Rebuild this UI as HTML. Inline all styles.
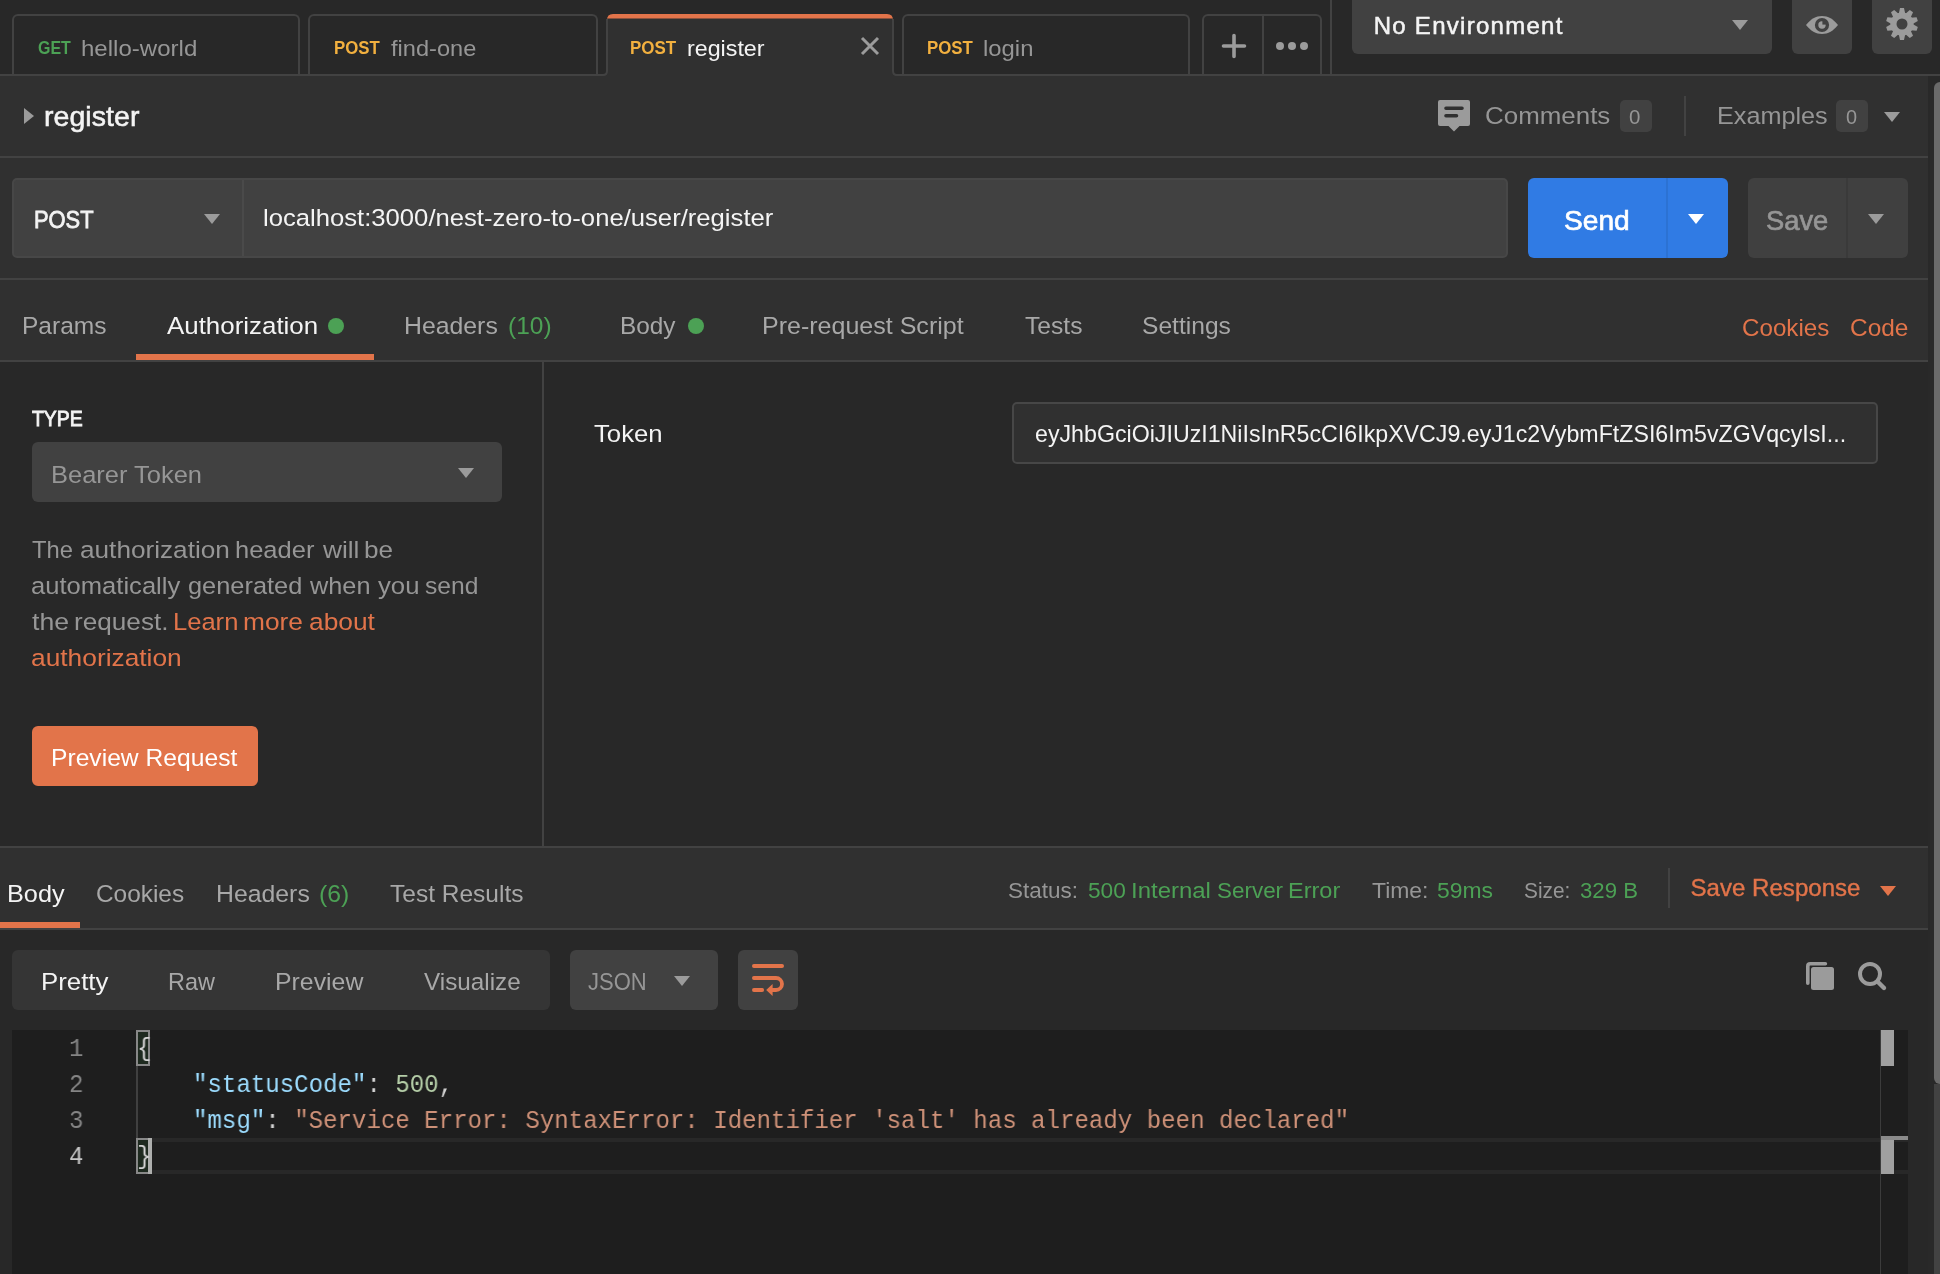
<!DOCTYPE html>
<html lang="en"><head><meta charset="utf-8"><title>Postman</title>
<style>
*{margin:0;padding:0;box-sizing:border-box}
html,body{width:1940px;height:1274px;overflow:hidden;background:#303030;font-family:"Liberation Sans",sans-serif}
body{position:relative}
.b{position:absolute}
.t{position:absolute;transform-origin:0 0;white-space:nowrap;line-height:1em;font-family:"Liberation Sans",sans-serif}
.m{position:absolute;will-change:transform;transform-origin:0 50%;white-space:pre;line-height:36px;font-size:25.5px;font-family:"Liberation Mono",monospace}
.tab{position:absolute;top:14px;height:60px;width:288px;border:2px solid #424242;border-bottom:none;border-radius:6px 6px 0 0;background:#282828}
svg{position:absolute;overflow:visible}
#tx{position:absolute;left:0;top:0;width:1940px;height:1274px;will-change:transform}

</style></head>
<body>
<!-- top bar -->
<div class="b" style="left:0;top:0;width:1940px;height:74px;background:#282828"></div>
<div class="tab" style="left:12px"></div>
<div class="tab" style="left:308px;width:290px"></div>
<div class="tab" style="left:902px"></div>
<!-- plus / dots box -->
<div class="tab" style="left:1202px;width:120px"></div>
<div class="b" style="left:1262px;top:16px;width:2px;height:58px;background:#424242"></div>
<div class="b" style="left:1330px;top:0;width:2px;height:74px;background:#424242"></div>
<div class="b" style="left:0;top:74px;width:1940px;height:2px;background:#424242"></div>
<!-- active tab -->
<svg style="left:596px;top:14px" width="308" height="62" viewBox="0 0 308 62">
<path d="M2 62H6Q11 62 11 57V6Q11 0 17 0H291Q297 0 297 6V57Q297 62 302 62H306Z" fill="#303030"/>
<path d="M0 61H7Q11 61 11 57V5M308 61H301Q297 61 297 57V5" stroke="#424242" stroke-width="2" fill="none"/>
<path d="M11 4.500V6Q11 0 17 0H291Q297 0 297 6V4.500Z" fill="#e2744a"/>
</svg>
<!-- close x -->
<svg style="left:861px;top:37px" width="18" height="18" viewBox="0 0 18 18"><path d="M1 1L17 17M17 1L1 17" stroke="#9b9b9b" stroke-width="3" fill="none"/></svg>
<svg style="left:1222px;top:34px" width="24" height="24" viewBox="0 0 24 24"><path d="M12 1.5V22.5M1.5 12H22.5" stroke="#9b9b9b" stroke-width="3.6" stroke-linecap="round" fill="none"/></svg>
<svg style="left:1276px;top:42px" width="32" height="8" viewBox="0 0 32 8"><circle cx="4" cy="4" r="4" fill="#9b9b9b"/><circle cx="16" cy="4" r="4" fill="#9b9b9b"/><circle cx="28" cy="4" r="4" fill="#9b9b9b"/></svg>
<!-- env selector -->
<div class="b" style="left:1352px;top:-6px;width:420px;height:60px;background:#414141;border-radius:6px"></div>
<svg style="left:1732px;top:20px" width="16" height="10" viewBox="0 0 16 10"><path d="M0 0H16L8 10Z" fill="#9b9b9b"/></svg>
<div class="b" style="left:1792px;top:-6px;width:60px;height:60px;background:#414141;border-radius:6px"></div>
<div class="b" style="left:1872px;top:-6px;width:60px;height:60px;background:#414141;border-radius:6px"></div>
<!-- eye -->
<svg style="left:1806px;top:16px" width="32" height="18" viewBox="0 0 32 18"><path d="M0 9C4.500 3.200 10 0 16 0S27.500 3.200 32 9C27.500 14.800 22 18 16 18S4.500 14.800 0 9Z" fill="#9b9b9b"/><circle cx="16" cy="9" r="7.100" fill="#414141"/><circle cx="16" cy="9" r="3.700" fill="#9b9b9b"/><path d="M16.400 8.600V4.800H20.200V8.600Z" fill="#414141"/></svg>
<!-- gear -->
<svg style="left:1886px;top:8px" width="32" height="32" viewBox="-16 -16 32 32"><g fill="#9b9b9b"><circle r="11.600"/><path id="gt" d="M-3.300 -10L-2 -16H2L3.300 -10Z"/><use href="#gt" transform="rotate(36)"/><use href="#gt" transform="rotate(72)"/><use href="#gt" transform="rotate(108)"/><use href="#gt" transform="rotate(144)"/><use href="#gt" transform="rotate(180)"/><use href="#gt" transform="rotate(216)"/><use href="#gt" transform="rotate(252)"/><use href="#gt" transform="rotate(288)"/><use href="#gt" transform="rotate(324)"/></g><circle r="5.500" fill="#414141"/></svg>

<!-- title row -->
<svg style="left:24px;top:108px" width="10" height="16" viewBox="0 0 10 16"><path d="M0 0L10 8L0 16Z" fill="#9b9b9b"/></svg>
<!-- comments icon -->
<svg style="left:1438px;top:100px" width="32" height="32" viewBox="0 0 32 32"><path d="M2 0H30Q32 0 32 2V24Q32 26 30 26H21.500L16 31.500L10.500 26H2Q0 26 0 24V2Q0 0 2 0Z" fill="#9b9b9b"/><path d="M8 8.300H24M8 15.700H18.500" stroke="#303030" stroke-width="3.600" stroke-linecap="round"/></svg>
<div class="b" style="left:1620px;top:100px;width:32px;height:32px;background:#414141;border-radius:5px"></div>
<div class="b" style="left:1684px;top:96px;width:2px;height:40px;background:#424242"></div>
<div class="b" style="left:1836px;top:100px;width:32px;height:32px;background:#414141;border-radius:5px"></div>
<svg style="left:1884px;top:112px" width="16" height="10" viewBox="0 0 16 10"><path d="M0 0H16L8 10Z" fill="#9b9b9b"/></svg>
<div class="b" style="left:0;top:156px;width:1928px;height:2px;background:#424242"></div>

<!-- url row -->
<div class="b" style="left:12px;top:178px;width:1496px;height:80px;background:#414141;border:2px solid #474747;border-radius:5px"></div>
<div class="b" style="left:242px;top:180px;width:2px;height:76px;background:#4a4a4a"></div>
<svg style="left:204px;top:214px" width="16" height="10" viewBox="0 0 16 10"><path d="M0 0H16L8 10Z" fill="#9b9b9b"/></svg>
<div class="b" style="left:1528px;top:178px;width:200px;height:80px;background:#307be4;border-radius:6px"></div>
<div class="b" style="left:1666px;top:178px;width:2px;height:80px;background:#2c72d3"></div>
<svg style="left:1688px;top:214px" width="16" height="10" viewBox="0 0 16 10"><path d="M0 0H16L8 10Z" fill="#ffffff"/></svg>
<div class="b" style="left:1748px;top:178px;width:160px;height:80px;background:#404040;border-radius:6px"></div>
<div class="b" style="left:1846px;top:178px;width:2px;height:80px;background:#3a3a3a"></div>
<svg style="left:1868px;top:214px" width="16" height="10" viewBox="0 0 16 10"><path d="M0 0H16L8 10Z" fill="#9b9b9b"/></svg>
<div class="b" style="left:0;top:278px;width:1928px;height:2px;background:#424242"></div>

<!-- request tabs -->
<div class="b" style="left:328px;top:318px;width:16px;height:16px;border-radius:50%;background:#4ca155"></div>
<div class="b" style="left:688px;top:318px;width:16px;height:16px;border-radius:50%;background:#4ca155"></div>
<div class="b" style="left:136px;top:354px;width:238px;height:6px;background:#e2744a"></div>
<div class="b" style="left:0;top:360px;width:1928px;height:2px;background:#424242"></div>

<!-- auth panel -->
<div class="b" style="left:0;top:362px;width:1928px;height:484px;background:#282828"></div>
<div class="b" style="left:542px;top:362px;width:2px;height:484px;background:#424242"></div>
<div class="b" style="left:32px;top:442px;width:470px;height:60px;background:#414141;border-radius:6px"></div>
<svg style="left:458px;top:468px" width="16" height="10" viewBox="0 0 16 10"><path d="M0 0H16L8 10Z" fill="#9b9b9b"/></svg>
<div class="b" style="left:32px;top:726px;width:226px;height:60px;background:#e2744a;border-radius:6px"></div>
<div class="b" style="left:1012px;top:402px;width:866px;height:62px;background:#303030;border:2px solid #474747;border-radius:5px"></div>
<div class="b" style="left:0;top:846px;width:1928px;height:2px;background:#424242"></div>

<!-- response tabs -->
<div class="b" style="left:0;top:922px;width:80px;height:6px;background:#e2744a"></div>
<div class="b" style="left:0;top:928px;width:1928px;height:2px;background:#424242"></div>
<div class="b" style="left:1668px;top:868px;width:2px;height:40px;background:#424242"></div>
<svg style="left:1880px;top:886px" width="16" height="10" viewBox="0 0 16 10"><path d="M0 0H16L8 10Z" fill="#e2744a"/></svg>

<!-- response body -->
<div class="b" style="left:0;top:930px;width:1928px;height:344px;background:#282828"></div>
<div class="b" style="left:12px;top:950px;width:538px;height:60px;background:#353535;border-radius:6px"></div>
<div class="b" style="left:570px;top:950px;width:148px;height:60px;background:#414141;border-radius:6px"></div>
<svg style="left:674px;top:976px" width="16" height="10" viewBox="0 0 16 10"><path d="M0 0H16L8 10Z" fill="#9b9b9b"/></svg>
<div class="b" style="left:738px;top:950px;width:60px;height:60px;background:#414141;border-radius:6px"></div>
<!-- wrap icon -->
<svg style="left:752px;top:962px" width="34" height="36" viewBox="0 0 34 36"><g stroke="#e2744a" stroke-width="3.800" stroke-linecap="round" fill="none"><path d="M1.900 4H30.100"/><path d="M1.900 16H24A6 6 0 0 1 24 28H19"/><path d="M1.900 28H10.200"/></g><path d="M14.200 28L20.600 22V34Z" fill="#e2744a"/></svg>
<!-- copy icon -->
<svg style="left:1806px;top:962px" width="28" height="28" viewBox="0 0 28 28"><rect x="5" y="5" width="23" height="23" rx="2.500" fill="#9b9b9b"/><path d="M1.800 21.200V4.200Q1.800 1.800 4.200 1.800H19.400" stroke="#9b9b9b" stroke-width="3.600" stroke-linecap="round" fill="none"/></svg>
<!-- search icon -->
<svg style="left:1858px;top:962px" width="28" height="28" viewBox="0 0 28 28"><circle cx="12" cy="12" r="10" stroke="#9b9b9b" stroke-width="4" fill="none"/><path d="M19.500 19.500L26 26" stroke="#9b9b9b" stroke-width="4.400" stroke-linecap="round"/></svg>

<!-- editor -->
<div class="b" style="left:12px;top:1030px;width:1896px;height:244px;background:#1e1e1e"></div>
<!-- current line -->
<div class="b" style="left:136px;top:1138px;width:1772px;height:36px;border-top:4px solid #282828;border-bottom:4px solid #282828"></div>
<!-- indent guide -->
<div class="b" style="left:136px;top:1066px;width:2px;height:72px;background:#404040"></div>
<!-- bracket boxes -->
<div class="b" style="left:136px;top:1030px;width:14px;height:36px;background:#1e2a1f;border:2px solid #888888"></div>
<div class="b" style="left:136px;top:1138px;width:14px;height:36px;background:#1e2a1f;border:2px solid #888888"></div>
<div class="b" style="left:148px;top:1138px;width:4px;height:36px;background:#aeafad"></div>
<!-- overview ruler -->
<div class="b" style="left:1880px;top:1030px;width:1px;height:244px;background:#3c3c3c"></div>
<div class="b" style="left:1881px;top:1030px;width:13px;height:36px;background:#a0a0a0"></div>
<div class="b" style="left:1881px;top:1138px;width:13px;height:36px;background:#a0a0a0"></div>
<div class="b" style="left:1881px;top:1136px;width:27px;height:4px;background:#8a8a8a"></div>
<div class="b" style="left:1894px;top:1142px;width:10px;height:28px;background:#1e1e1e"></div>
<!-- line numbers -->
<span class="m" style="left:69.15px;top:1032px;color:#858585;transform:scaleX(0.9443)">1</span>
<span class="m" style="left:69.15px;top:1068px;color:#858585;transform:scaleX(0.9443)">2</span>
<span class="m" style="left:69.15px;top:1104px;color:#858585;transform:scaleX(0.9443)">3</span>
<span class="m" style="left:69.15px;top:1140px;color:#c6c6c6;transform:scaleX(0.9443)">4</span>
<span class="m" style="left:136.80px;top:1032px;color:#d4d4d4;transform:scaleX(0.9443)">{</span>
<span class="m" style="left:193.10px;top:1068px;color:#d4d4d4;transform:scaleX(0.9443)"><span style="color:#9cdcfe">"statusCode"</span>: <span style="color:#b5cea8">500</span>,</span>
<span class="m" style="left:193.10px;top:1104px;color:#d4d4d4;transform:scaleX(0.9443)"><span style="color:#9cdcfe">"msg"</span>: <span style="color:#ce9178">"Service Error: SyntaxError: Identifier 'salt' has already been declared"</span></span>
<span class="m" style="left:136.80px;top:1140px;color:#d4d4d4;transform:scaleX(0.9443)">}</span>

<!-- right scrollbar strip -->
<div class="b" style="left:1928px;top:76px;width:12px;height:1198px;background:#292929"></div>
<div class="b" style="left:1934px;top:82px;width:12px;height:1002px;background:#6a6a6a;border-radius:6px"></div>
<div class="b" style="left:1934px;top:1084px;width:6px;height:190px;background:#424242"></div>

<div id="tx">
<span class="t" style="left:38.13px;top:39.00px;font-size:18px;color:#4ca155;transform:scaleX(0.8881);font-weight:700;">GET</span>
<span class="t" style="left:80.60px;top:38.00px;font-size:22.5px;color:#969696;transform:scaleX(1.0685);">hello-world</span>
<span class="t" style="left:334.23px;top:39.00px;font-size:18px;color:#f2b03f;transform:scaleX(0.9338);font-weight:700;">POST</span>
<span class="t" style="left:391.24px;top:38.00px;font-size:22.5px;color:#969696;transform:scaleX(1.0491);">find-one</span>
<span class="t" style="left:630.42px;top:39.00px;font-size:18px;color:#f2b03f;transform:scaleX(0.9422);font-weight:700;">POST</span>
<span class="t" style="left:686.95px;top:38.00px;font-size:22.5px;color:#f4f4f4;transform:scaleX(1.0333);">register</span>
<span class="t" style="left:927.13px;top:39.00px;font-size:18px;color:#f2b03f;transform:scaleX(0.9359);font-weight:700;">POST</span>
<span class="t" style="left:982.81px;top:38.00px;font-size:22.5px;color:#969696;transform:scaleX(1.0610);">login</span>
<span class="t" style="left:1373.65px;top:14.00px;font-size:24px;color:#f4f4f4;transform:scaleX(1.0000);letter-spacing:1.284px;-webkit-text-stroke:0.5px #f4f4f4;">No Environment</span>
<span class="t" style="left:43.88px;top:102.00px;font-size:28.5px;color:#f4f4f4;transform:scaleX(1.0000);letter-spacing:0.087px;-webkit-text-stroke:0.55px #f4f4f4;">register</span>
<span class="t" style="left:1485.48px;top:104.00px;font-size:24.5px;color:#969696;transform:scaleX(1.0578);">Comments</span>
<span class="t" style="left:1629.23px;top:107.00px;font-size:20px;color:#969696;transform:scaleX(1.0244);">0</span>
<span class="t" style="left:1716.64px;top:104.00px;font-size:24.5px;color:#969696;transform:scaleX(1.0283);">Examples</span>
<span class="t" style="left:1846.05px;top:107.00px;font-size:20px;color:#969696;transform:scaleX(0.9951);">0</span>
<span class="t" style="left:33.58px;top:208.00px;font-size:24px;color:#f4f4f4;transform:scaleX(0.9108);-webkit-text-stroke:0.8px #f4f4f4;">POST</span>
<span class="t" style="left:263.17px;top:206.00px;font-size:24.5px;color:#f4f4f4;transform:scaleX(1.0467);">localhost:3000/nest-zero-to-one/user/register</span>
<span class="t" style="left:1563.82px;top:206.00px;font-size:28.5px;color:#ffffff;transform:scaleX(0.9867);-webkit-text-stroke:0.7px #ffffff;">Send</span>
<span class="t" style="left:1765.65px;top:206.00px;font-size:28.5px;color:#969696;transform:scaleX(0.9577);-webkit-text-stroke:0.7px #969696;">Save</span>
<span class="t" style="left:21.80px;top:314.00px;font-size:24.5px;color:#a8a8a8;transform:scaleX(1.0005);">Params</span>
<span class="t" style="left:167.00px;top:314.00px;font-size:24.5px;color:#f4f4f4;transform:scaleX(1.0570);">Authorization</span>
<span class="t" style="left:403.97px;top:314.00px;font-size:24.5px;color:#a8a8a8;transform:scaleX(1.0127);">Headers</span>
<span class="t" style="left:507.67px;top:314.00px;font-size:24px;color:#4ca155;transform:scaleX(1.0202);">(10)</span>
<span class="t" style="left:619.71px;top:314.00px;font-size:24.5px;color:#a8a8a8;transform:scaleX(0.9946);">Body</span>
<span class="t" style="left:762.16px;top:314.00px;font-size:24.5px;color:#a8a8a8;transform:scaleX(1.0213);">Pre-request Script</span>
<span class="t" style="left:1024.80px;top:314.00px;font-size:24.5px;color:#a8a8a8;transform:scaleX(1.0047);">Tests</span>
<span class="t" style="left:1142.34px;top:314.00px;font-size:24.5px;color:#a8a8a8;transform:scaleX(1.0043);">Settings</span>
<span class="t" style="left:1742.47px;top:316.00px;font-size:24.5px;color:#e2744a;transform:scaleX(0.9861);">Cookies</span>
<span class="t" style="left:1849.75px;top:316.00px;font-size:24.5px;color:#e2744a;transform:scaleX(0.9983);">Code</span>
<span class="t" style="left:32.31px;top:408.00px;font-size:22px;color:#f4f4f4;transform:scaleX(0.8830);-webkit-text-stroke:0.9px #f4f4f4;">TYPE</span>
<span class="t" style="left:50.72px;top:463.00px;font-size:24.5px;color:#969696;transform:scaleX(1.0392);">Bearer Token</span>
<span class="t" style="left:31.81px;top:538.00px;font-size:24.5px;color:#969696;transform:scaleX(0.9710);">The</span>
<span class="t" style="left:79.73px;top:538.00px;font-size:24.5px;color:#969696;transform:scaleX(1.0681);">authorization</span>
<span class="t" style="left:235.48px;top:538.00px;font-size:24.5px;color:#969696;transform:scaleX(1.0406);">header</span>
<span class="t" style="left:322.50px;top:538.00px;font-size:24.5px;color:#969696;transform:scaleX(1.0712);">will</span>
<span class="t" style="left:363.60px;top:538.00px;font-size:24.5px;color:#969696;transform:scaleX(1.0666);">be</span>
<span class="t" style="left:31.26px;top:574.00px;font-size:24.5px;color:#969696;transform:scaleX(1.0439);">automatically</span>
<span class="t" style="left:188.06px;top:574.00px;font-size:24.5px;color:#969696;transform:scaleX(1.0357);">generated</span>
<span class="t" style="left:310.30px;top:574.00px;font-size:24.5px;color:#969696;transform:scaleX(1.0320);">when</span>
<span class="t" style="left:377.94px;top:574.00px;font-size:24.5px;color:#969696;transform:scaleX(1.0498);">you</span>
<span class="t" style="left:425.05px;top:574.00px;font-size:24.5px;color:#969696;transform:scaleX(1.0048);">send</span>
<span class="t" style="left:32.03px;top:610.00px;font-size:24.5px;color:#969696;transform:scaleX(1.0879);">the</span>
<span class="t" style="left:74.00px;top:610.00px;font-size:24.5px;color:#969696;transform:scaleX(1.0678);">request.</span>
<span class="t" style="left:172.61px;top:610.00px;font-size:24.5px;color:#e2744a;transform:scaleX(1.0427);">Learn</span>
<span class="t" style="left:243.19px;top:610.00px;font-size:24.5px;color:#e2744a;transform:scaleX(1.0746);">more</span>
<span class="t" style="left:309.23px;top:610.00px;font-size:24.5px;color:#e2744a;transform:scaleX(1.0743);">about</span>
<span class="t" style="left:31.23px;top:646.00px;font-size:24.5px;color:#e2744a;transform:scaleX(1.0745);">authorization</span>
<span class="t" style="left:50.79px;top:746.00px;font-size:24.5px;color:#ffffff;transform:scaleX(1.0060);">Preview Request</span>
<span class="t" style="left:594.08px;top:422.00px;font-size:24.5px;color:#f4f4f4;transform:scaleX(1.0490);">Token</span>
<span class="t" style="left:1035.05px;top:422.00px;font-size:24.5px;color:#f4f4f4;transform:scaleX(0.9466);">eyJhbGciOiJIUzI1NiIsInR5cCI6IkpXVCJ9.eyJ1c2VybmFtZSI6Im5vZGVqcyIsI...</span>
<span class="t" style="left:6.64px;top:882.00px;font-size:24.5px;color:#f4f4f4;transform:scaleX(1.0313);">Body</span>
<span class="t" style="left:96.36px;top:882.00px;font-size:24.5px;color:#a8a8a8;transform:scaleX(0.9952);">Cookies</span>
<span class="t" style="left:215.97px;top:882.00px;font-size:24.5px;color:#a8a8a8;transform:scaleX(1.0127);">Headers</span>
<span class="t" style="left:319.45px;top:882.00px;font-size:24px;color:#4ca155;transform:scaleX(1.0320);">(6)</span>
<span class="t" style="left:389.80px;top:882.00px;font-size:24.5px;color:#a8a8a8;transform:scaleX(1.0001);">Test Results</span>
<span class="t" style="left:1008.30px;top:880.00px;font-size:22.5px;color:#969696;transform:scaleX(0.9987);">Status:</span>
<span class="t" style="left:1087.97px;top:880.00px;font-size:22px;color:#4ca155;transform:scaleX(1.0318);">500</span>
<span class="t" style="left:1131.47px;top:880.00px;font-size:22.5px;color:#4ca155;transform:scaleX(1.0646);">Internal</span>
<span class="t" style="left:1216.70px;top:880.00px;font-size:22.5px;color:#4ca155;transform:scaleX(0.9973);">Server</span>
<span class="t" style="left:1288.17px;top:880.00px;font-size:22.5px;color:#4ca155;transform:scaleX(1.0460);">Error</span>
<span class="t" style="left:1371.79px;top:880.00px;font-size:22.5px;color:#969696;transform:scaleX(1.0193);">Time:</span>
<span class="t" style="left:1437.28px;top:880.00px;font-size:22.5px;color:#4ca155;transform:scaleX(1.0173);">59ms</span>
<span class="t" style="left:1523.87px;top:880.00px;font-size:22.5px;color:#969696;transform:scaleX(0.9253);">Size:</span>
<span class="t" style="left:1579.74px;top:880.00px;font-size:22px;color:#4ca155;transform:scaleX(1.0077);">329 B</span>
<span class="t" style="left:1690.50px;top:876.00px;font-size:24px;color:#e2744a;transform:scaleX(1.0000);letter-spacing:0.042px;-webkit-text-stroke:0.4px #e2744a;">Save Response</span>
<span class="t" style="left:40.59px;top:970.00px;font-size:24.5px;color:#f4f4f4;transform:scaleX(1.0536);">Pretty</span>
<span class="t" style="left:167.79px;top:970.00px;font-size:24.5px;color:#a8a8a8;transform:scaleX(0.9573);">Raw</span>
<span class="t" style="left:274.57px;top:970.00px;font-size:24.5px;color:#a8a8a8;transform:scaleX(1.0135);">Preview</span>
<span class="t" style="left:423.55px;top:970.00px;font-size:24.5px;color:#a8a8a8;transform:scaleX(0.9904);">Visualize</span>
<span class="t" style="left:587.54px;top:970.00px;font-size:24px;color:#969696;transform:scaleX(0.9168);">JSON</span>
</div>
</body></html>
